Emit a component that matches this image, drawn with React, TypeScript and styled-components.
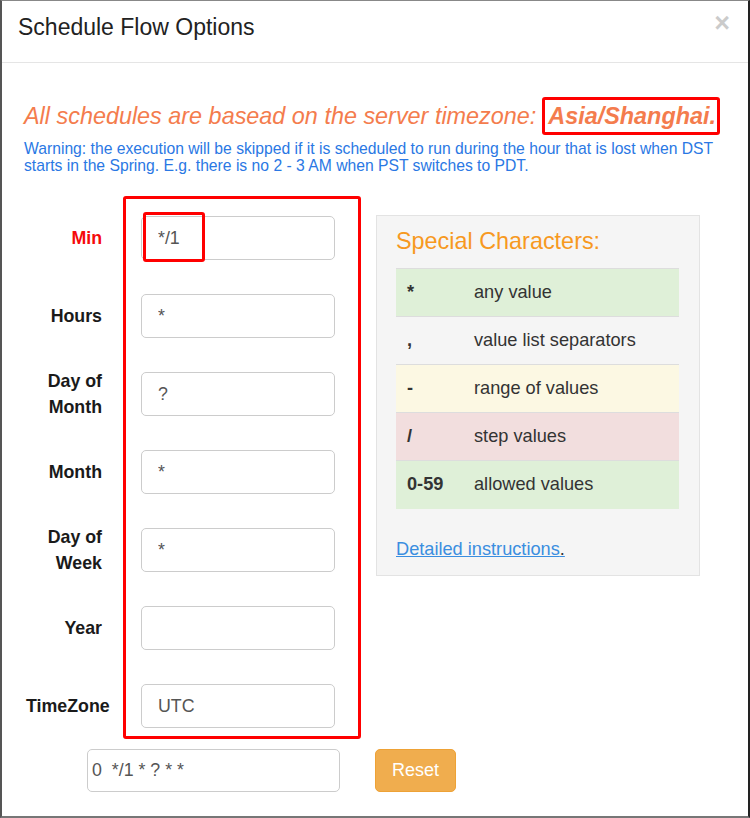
import React from 'react';
import styled, { createGlobalStyle } from 'styled-components';

const GlobalStyle = createGlobalStyle`
  html, body {
    margin: 0;
    padding: 0;
    background: #fff;
  }
  * {
    box-sizing: border-box;
  }
  body {
    font-family: "Liberation Sans", Arial, sans-serif;
    color: #333;
  }
`;

const Modal = styled.div`
  width: 750px;
  height: 818px;
  background: #fff;
  border-left: 2px solid #555;
  border-top: 1px solid #888;
  border-right: 2px solid #222;
  border-bottom: 2px solid #777;
  overflow: hidden;
`;

const Header = styled.div`
  height: 62px;
  padding: 12px 18px 0 16px;
  border-bottom: 1px solid #e5e5e5;
  display: flex;
  justify-content: space-between;
  align-items: flex-start;
`;

const Title = styled.h4`
  margin: 0;
  font-size: 23px;
  font-weight: normal;
  line-height: 28px;
  color: #222;
`;

const Close = styled.button`
  border: 0;
  background: none;
  padding: 0;
  margin-top: -4px;
  font-family: "Liberation Sans", Arial, sans-serif;
  font-size: 27px;
  font-weight: bold;
  line-height: 28px;
  color: #000;
  opacity: 0.2;
`;

const Body = styled.div`
  padding: 40px 24px 0 22px;
`;

const Notice = styled.p`
  margin: 0;
  font-size: 23.4px;
  line-height: 26px;
  font-style: italic;
  color: #f47c4d;
  white-space: nowrap;
`;

const Zone = styled.span`
  margin-left: 6px;
  padding: 3px 1px 3px 3px;
  font-weight: bold;
  border: 3px solid #f00;
  border-radius: 3px;
`;

const Warning = styled.p`
  margin: 11px 0 0;
  font-size: 15.7px;
  line-height: 17px;
  color: #2a78e4;
`;

const Main = styled.div`
  display: flex;
  align-items: flex-start;
  margin-top: 22px;
`;

const LabelColumn = styled.div`
  width: 76px;
  margin-left: 2px;
  margin-right: 21px;
  padding-top: 20px;
  display: flex;
  flex-direction: column;
  gap: 34px;
`;

const Label = styled.label<{ $active?: boolean }>`
  height: 44px;
  display: flex;
  align-items: center;
  justify-content: safe flex-end;
  text-align: right;
  font-size: 17.8px;
  line-height: 26px;
  font-weight: bold;
  color: ${(p) => (p.$active ? '#f50a0a' : '#1a1a1a')};
`;

const FieldBox = styled.div`
  width: 238px;
  padding: 17px 23px 8px 15px;
  border: 3px solid #f00;
  border-radius: 3px;
  display: flex;
  flex-direction: column;
  gap: 34px;
`;

const FieldWrap = styled.div`
  position: relative;
`;

const Highlight = styled.span`
  position: absolute;
  left: 2px;
  top: -4px;
  width: 62px;
  height: 50px;
  border: 3px solid #f00;
  border-radius: 3px;
  pointer-events: none;
`;

const Input = styled.input`
  display: block;
  width: 100%;
  height: 44px;
  padding: 0 16px;
  border: 1px solid #ccc;
  border-radius: 5px;
  font-family: "Liberation Sans", Arial, sans-serif;
  font-size: 17.8px;
  color: #555;
  background: #fff;
  outline: none;
`;

const Panel = styled.div`
  width: 324px;
  margin-left: 15px;
  margin-top: 19px;
  padding: 12px 20px 13px 19px;
  background: #f5f5f5;
  border: 1px solid #e3e3e3;
`;

const PanelTitle = styled.h4`
  margin: 0 0 14px;
  font-size: 23.4px;
  line-height: 26px;
  font-weight: normal;
  color: #f7991f;
`;

const Table = styled.table`
  width: 100%;
  border-collapse: collapse;
  font-size: 18.2px;
  color: #333;
`;

const Row = styled.tr<{ $tone: string }>`
  height: 48px;
  background: ${(p) => p.$tone};
  border-top: 1px solid #ddd;
`;

const Sym = styled.td`
  width: 78px;
  padding: 0 0 0 11px;
  font-weight: bold;
`;

const Desc = styled.td`
  padding: 0;
`;

const Link = styled.a`
  display: inline-block;
  margin-top: 27px;
  font-size: 18.2px;
  line-height: 26px;
  color: #3a8ee0;
  text-decoration: underline;
  text-decoration-color: #3a8ee0;
`;

const Dot = styled.span`
  color: #333;
`;

const Bottom = styled.div`
  display: flex;
  align-items: center;
  margin-top: 10px;
  padding-left: 63px;
`;

const CronInput = styled(Input)`
  width: 253px;
  height: 43px;
  padding: 0 4px;
`;

const ResetButton = styled.button`
  margin-left: 35px;
  width: 81px;
  height: 43px;
  border: 1px solid #eea236;
  border-radius: 5px;
  background: #f0ad4e;
  color: #fff;
  font-family: "Liberation Sans", Arial, sans-serif;
  font-size: 18px;
`;

const fields = [
  { label: 'Min', value: '*/1', active: true },
  { label: 'Hours', value: '*' },
  { label: 'Day of Month', value: '?' },
  { label: 'Month', value: '*' },
  { label: 'Day of Week', value: '*' },
  { label: 'Year', value: '' },
  { label: 'TimeZone', value: 'UTC' },
];

const specials = [
  { sym: '*', text: 'any value', tone: '#dff0d8' },
  { sym: ',', text: 'value list separators', tone: 'transparent' },
  { sym: '-', text: 'range of values', tone: '#fcf8e3' },
  { sym: '/', text: 'step values', tone: '#f2dede' },
  { sym: '0-59', text: 'allowed values', tone: '#dff0d8' },
];

function App() {
  return (
    <>
      <GlobalStyle />
      <Modal>
        <Header>
          <Title>Schedule Flow Options</Title>
          <Close>×</Close>
        </Header>
        <Body>
          <Notice>
            All schedules are basead on the server timezone:
            <Zone>Asia/Shanghai.</Zone>
          </Notice>
          <Warning>
            Warning: the execution will be skipped if it is scheduled to run during the hour that is lost when DST
            starts in the Spring. E.g. there is no 2 - 3 AM when PST switches to PDT.
          </Warning>
          <Main>
            <LabelColumn>
              {fields.map((f) => (
                <Label key={f.label} $active={f.active}>
                  {f.label}
                </Label>
              ))}
            </LabelColumn>
            <FieldBox>
              {fields.map((f) => (
                <FieldWrap key={f.label}>
                  <Input defaultValue={f.value} />
                  {f.active && <Highlight />}
                </FieldWrap>
              ))}
            </FieldBox>
            <Panel>
              <PanelTitle>Special Characters:</PanelTitle>
              <Table>
                <tbody>
                  {specials.map((s) => (
                    <Row key={s.sym} $tone={s.tone}>
                      <Sym>{s.sym}</Sym>
                      <Desc>{s.text}</Desc>
                    </Row>
                  ))}
                </tbody>
              </Table>
              <Link href="#">
                Detailed instructions<Dot>.</Dot>
              </Link>
            </Panel>
          </Main>
          <Bottom>
            <CronInput defaultValue="0  */1 * ? * *" />
            <ResetButton>Reset</ResetButton>
          </Bottom>
        </Body>
      </Modal>
    </>
  );
}

export default App;
